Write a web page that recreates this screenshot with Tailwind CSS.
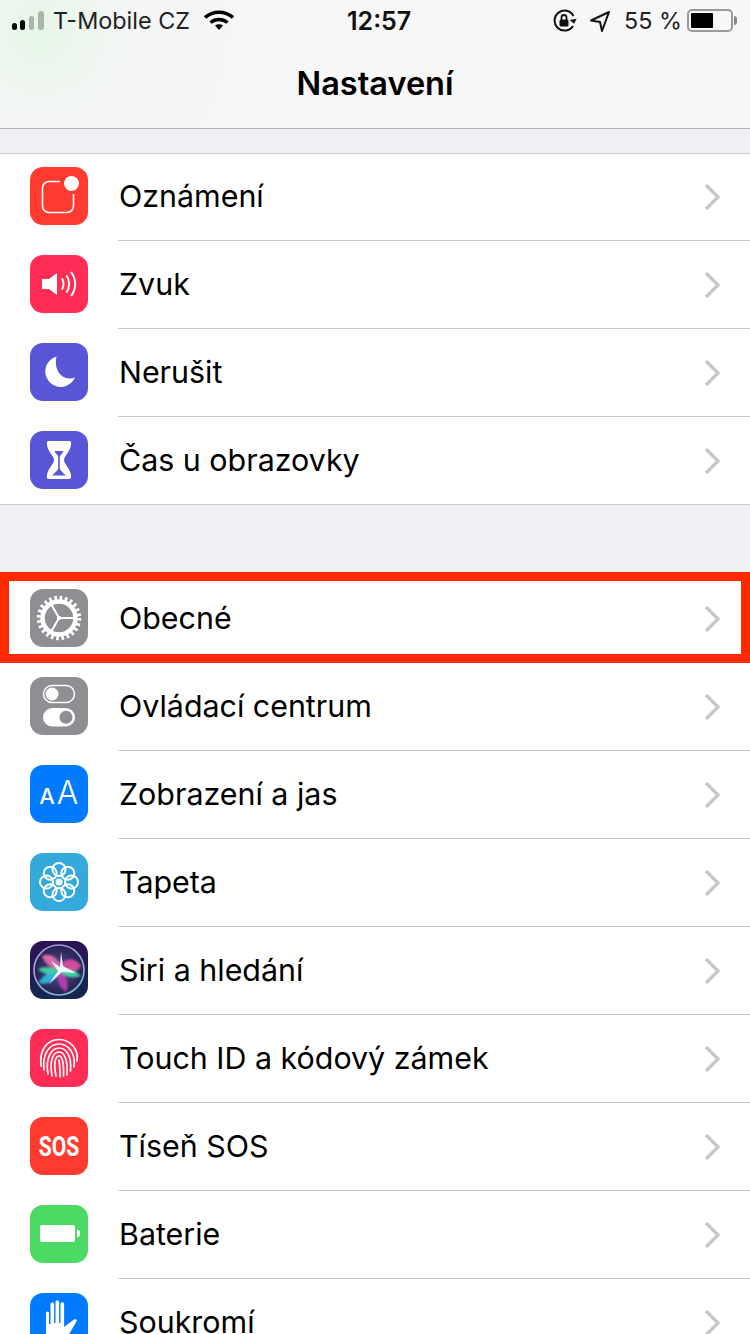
<!DOCTYPE html>
<html lang="cs">
<head>
  <meta charset="UTF-8">
  <meta name="viewport" content="width=device-width, initial-scale=1">
  <title>Nastavení</title>
  <script src="https://cdn.jsdelivr.net/npm/@tailwindcss/browser@4"></script>
</head>
<body class="bg-[#efeff4] font-['Inter',sans-serif] text-black">
<div class="relative w-[750px] h-[1334px] overflow-hidden">

  <!-- Navigation -->
  <div class="h-[129px] border-b border-[#b2b2b6] bg-[radial-gradient(circle_at_40px_30px,#e5f6e7,#f3f6f4_85px,#f7f7f8_300px)]">
    <div class="relative flex h-[41px] items-center justify-between pl-[12px] pr-[13px] text-[23.4px] leading-none text-[#222]">
      <div class="flex items-center">
        <svg width="34" height="22" viewBox="0 0 34 22" class="mr-[7px]">
          <rect x="0" y="13" width="5" height="7" rx="2.5" fill="#000"/>
          <rect x="8" y="10" width="5" height="10" rx="2.5" fill="#000"/>
          <rect x="17" y="6" width="5" height="14" rx="2.5" fill="#a9b5a9"/>
          <rect x="26" y="1" width="6" height="19" rx="3" fill="#a9b5a9"/>
        </svg>
        <span>T-Mobile CZ</span>
        <svg width="30" height="22" viewBox="0 0 30 22" class="ml-[14px]">
          <path d="M1 7.5C9 .5 21 .5 29 7.5" fill="none" stroke="#000" stroke-width="3.4"/>
          <path d="M6.500 12.500C11.500 8.500 18.500 8.500 23.500 12.500" fill="none" stroke="#000" stroke-width="3.400"/>
          <path d="M11 15.500C13.500 13.700 16.500 13.700 19 15.500L15 20Z" fill="#000"/>
        </svg>
      </div>
      <span class="absolute left-[347px] top-[8px] text-[25px] font-semibold leading-[26px] text-[#111]">12:57</span>
      <div class="flex items-center">
        <svg width="26" height="26" viewBox="0 0 26 26">
          <path d="M21 18A10 10 0 1 1 21.500 8" fill="none" stroke="#111" stroke-width="2"/>
          <path d="M18 11.500L25 11.500L21.500 16Z" fill="#111" transform="rotate(-10 21 13)"/>
          <rect x="7.500" y="11.500" width="9" height="7" rx="1.500" fill="#111"/>
          <path d="M9.500 12V9.500a2.500 2.500 0 0 1 5 0V12" fill="none" stroke="#111" stroke-width="1.800"/>
        </svg>
        <svg width="22" height="24" viewBox="0 0 22 24" class="ml-[11px]">
          <path d="M20 3L2 11.500L11 13L13 22Z" fill="none" stroke="#111" stroke-width="2" stroke-linejoin="round"/>
        </svg>
        <span class="ml-[13px]">55 %</span>
        <div class="ml-[5px] flex h-[23px] w-[46px] items-center rounded-[5px] border-[2px] border-[#9a9a9a] pl-[2px]">
          <div class="h-[15px] w-[22px] rounded-[1px] bg-black"></div>
        </div>
        <div class="ml-[1px] h-[9px] w-[3px] rounded-r-[3px] bg-[#8a8a8a]"></div>
      </div>
    </div>
    <div class="mt-[20px] text-center text-[32.5px] font-semibold leading-[46px]">Nastavení</div>
  </div>

  <div class="h-[24px]"></div>

  <!-- First group -->
  <div class="bg-white shadow-[inset_0_1px_0_#c8c7cc]">
    <div class="flex h-[88px]">
      <div class="flex w-[118px] items-center pb-[2px] pl-[30px]">
        <svg width="58" height="58" viewBox="0 0 58 58">
          <rect width="58" height="58" rx="13" fill="#ff3b30"/>
          <path d="M30 14.500H19a6.500 6.500 0 0 0-6.500 6.500V39a6.500 6.500 0 0 0 6.500 6.500H37a6.500 6.500 0 0 0 6.500-6.500V27" fill="none" stroke="#fff" stroke-width="1.600"/>
          <circle cx="41.500" cy="16.500" r="7.500" fill="#fff"/>
        </svg>
      </div>
      <div class="flex flex-1 items-center justify-between border-b border-[#c8c7cc] pl-px pr-[30px] text-[30.4px]">
        <span>Oznámení</span>
        <svg width="16" height="28" viewBox="0 0 16 28"><path d="M2 2L14 14L2 26" fill="none" stroke="#c7c7cc" stroke-width="3.500"/></svg>
      </div>
    </div>
    <div class="flex h-[88px]">
      <div class="flex w-[118px] items-center pb-[2px] pl-[30px]">
        <svg width="58" height="58" viewBox="0 0 58 58">
          <rect width="58" height="58" rx="13" fill="#ff2d55"/>
          <path d="M12 24H19L27 18V40L19 34H12Z" fill="#fff"/>
          <path d="M32 23.500C34 26.500 34 31.500 32 34.500M36.500 20.500C40 25.500 40 32.500 36.500 37.500M41 17C46.500 24 46.500 34 41 41" fill="none" stroke="#fff" stroke-width="2"/>
        </svg>
      </div>
      <div class="flex flex-1 items-center justify-between border-b border-[#c8c7cc] pl-px pr-[30px] text-[30.4px]">
        <span>Zvuk</span>
        <svg width="16" height="28" viewBox="0 0 16 28"><path d="M2 2L14 14L2 26" fill="none" stroke="#c7c7cc" stroke-width="3.500"/></svg>
      </div>
    </div>
    <div class="flex h-[88px]">
      <div class="flex w-[118px] items-center pb-[2px] pl-[30px]">
        <svg width="58" height="58" viewBox="0 0 58 58">
          <rect width="58" height="58" rx="13" fill="#5856d6"/>
          <path d="M26.500 13.500A15.500 15.500 0 1 0 45 34.500C35 38.500 23 30 26.500 13.500Z" fill="#fff"/>
        </svg>
      </div>
      <div class="flex flex-1 items-center justify-between border-b border-[#c8c7cc] pl-px pr-[30px] text-[30.4px]">
        <span>Nerušit</span>
        <svg width="16" height="28" viewBox="0 0 16 28"><path d="M2 2L14 14L2 26" fill="none" stroke="#c7c7cc" stroke-width="3.500"/></svg>
      </div>
    </div>
    <div class="flex h-[88px] border-b border-[#c8c7cc]">
      <div class="flex w-[118px] items-center pb-px pl-[30px]">
        <svg width="58" height="58" viewBox="0 0 58 58">
          <rect width="58" height="58" rx="13" fill="#5856d6"/>
          <path d="M19 10H39C41 10 41.500 11 41 14C40 21 34 25 34 29C34 33 40 37 41 44C41.500 47 40.500 48 39 48H19C17 48 16.500 47 17 44C18 37 24 33 24 29C24 25 18 21 17 14C16.500 11 17 10 19 10Z" fill="#fff"/>
          <path d="M24.500 20H33.500C32.500 22.500 30 24 29.800 26V37C30 39.500 33 41.500 36 44.500H22C25 41.500 28 39.500 28.200 37V26C28 24 25.500 22.500 24.500 20Z" fill="#5856d6"/>
        </svg>
      </div>
      <div class="flex flex-1 items-center justify-between pl-px pr-[30px] text-[30.4px]">
        <span>Čas u obrazovky</span>
        <svg width="16" height="28" viewBox="0 0 16 28"><path d="M2 2L14 14L2 26" fill="none" stroke="#c7c7cc" stroke-width="3.500"/></svg>
      </div>
    </div>
  </div>

  <div class="h-[70px]"></div>

  <!-- Second group -->
  <div class="bg-white">
    <div class="flex h-[88px]">
      <div class="flex w-[118px] items-center pb-[2px] pl-[30px]">
        <svg width="58" height="58" viewBox="0 0 58 58">
          <rect width="58" height="58" rx="13" fill="#8e8e93"/>
          <circle cx="29" cy="29" r="20" fill="none" stroke="#fff" stroke-width="4.500" stroke-dasharray="2.600 2.636"/>
          <circle cx="29" cy="29" r="16.500" fill="none" stroke="#fff" stroke-width="4.500"/>
          <path d="M29 29H45M29 29L21 15M29 29L21 43" fill="none" stroke="#fff" stroke-width="2"/>
          <circle cx="29" cy="29" r="2.200" fill="#fff"/>
        </svg>
      </div>
      <div class="flex flex-1 items-center justify-between border-b border-[#c8c7cc] pl-px pr-[30px] text-[30.4px]">
        <span>Obecné</span>
        <svg width="16" height="28" viewBox="0 0 16 28"><path d="M2 2L14 14L2 26" fill="none" stroke="#c7c7cc" stroke-width="3.500"/></svg>
      </div>
    </div>
    <div class="flex h-[88px]">
      <div class="flex w-[118px] items-center pb-[2px] pl-[30px]">
        <svg width="58" height="58" viewBox="0 0 58 58">
          <rect width="58" height="58" rx="13" fill="#8e8e93"/>
          <rect x="13.500" y="8.500" width="31" height="17" rx="8.500" fill="none" stroke="#fff" stroke-width="1.500"/>
          <circle cx="22" cy="17" r="6.500" fill="#fff"/>
          <rect x="13" y="31" width="32" height="18.500" rx="9.250" fill="#fff"/>
          <circle cx="36" cy="40.250" r="6.500" fill="#8e8e93"/>
        </svg>
      </div>
      <div class="flex flex-1 items-center justify-between border-b border-[#c8c7cc] pl-px pr-[30px] text-[30.4px]">
        <span>Ovládací centrum</span>
        <svg width="16" height="28" viewBox="0 0 16 28"><path d="M2 2L14 14L2 26" fill="none" stroke="#c7c7cc" stroke-width="3.500"/></svg>
      </div>
    </div>
    <div class="flex h-[88px]">
      <div class="flex w-[118px] items-center pb-[2px] pl-[30px]">
        <svg width="58" height="58" viewBox="0 0 58 58">
          <rect width="58" height="58" rx="13" fill="#007aff"/>
          <text x="17" y="38.500" text-anchor="middle" font-family="Inter" font-size="22" font-weight="500" fill="#fff">A</text>
          <text x="37.500" y="38.500" text-anchor="middle" font-family="Inter" font-size="32" font-weight="300" fill="#fff">A</text>
        </svg>
      </div>
      <div class="flex flex-1 items-center justify-between border-b border-[#c8c7cc] pl-px pr-[30px] text-[30.4px]">
        <span>Zobrazení a jas</span>
        <svg width="16" height="28" viewBox="0 0 16 28"><path d="M2 2L14 14L2 26" fill="none" stroke="#c7c7cc" stroke-width="3.500"/></svg>
      </div>
    </div>
    <div class="flex h-[88px]">
      <div class="flex w-[118px] items-center pb-[2px] pl-[30px]">
        <svg width="58" height="58" viewBox="0 0 58 58">
          <rect width="58" height="58" rx="13" fill="#34aadc"/>
          <g fill="none" stroke="#fff" stroke-width="2">
            <circle cx="29" cy="16.500" r="6.500"/><circle cx="37.800" cy="20.200" r="6.500"/>
            <circle cx="41.500" cy="29" r="6.500"/><circle cx="37.800" cy="37.800" r="6.500"/>
            <circle cx="29" cy="41.500" r="6.500"/><circle cx="20.200" cy="37.800" r="6.500"/>
            <circle cx="16.500" cy="29" r="6.500"/><circle cx="20.200" cy="20.200" r="6.500"/>
          </g>
          <circle cx="29" cy="29" r="3.500" fill="#fff"/>
        </svg>
      </div>
      <div class="flex flex-1 items-center justify-between border-b border-[#c8c7cc] pl-px pr-[30px] text-[30.4px]">
        <span>Tapeta</span>
        <svg width="16" height="28" viewBox="0 0 16 28"><path d="M2 2L14 14L2 26" fill="none" stroke="#c7c7cc" stroke-width="3.500"/></svg>
      </div>
    </div>
    <div class="flex h-[88px]">
      <div class="flex w-[118px] items-center pb-[2px] pl-[30px]">
        <svg width="58" height="58" viewBox="0 0 58 58">
          <defs>
            <linearGradient id="siriBg" x1="0" y1="0" x2="0" y2="1"><stop offset="0" stop-color="#2e1155"/><stop offset="1" stop-color="#14284f"/></linearGradient>
            <radialGradient id="siriOrb" cx="0.5" cy="0.5" r="0.55"><stop offset="0" stop-color="#5a4a90"/><stop offset="1" stop-color="#1c1f4a"/></radialGradient>
            <linearGradient id="siriRing" x1="0" y1="0" x2="1" y2="1"><stop offset="0" stop-color="#b98ad8"/><stop offset="1" stop-color="#6fc4cf"/></linearGradient>
            <filter id="siriBlur" x="-20%" y="-20%" width="140%" height="140%"><feGaussianBlur stdDeviation="1.200"/></filter>
            <filter id="siriGlow" x="-20%" y="-20%" width="140%" height="140%"><feGaussianBlur stdDeviation="0.700"/></filter>
          </defs>
          <rect width="58" height="58" rx="13" fill="url(#siriBg)"/>
          <circle cx="29" cy="29" r="25" fill="url(#siriOrb)" stroke="url(#siriRing)" stroke-width="1.700"/>
          <g filter="url(#siriBlur)">
            <path d="M12 15C21 11 29 18 33 29C24 29 15 24 12 15Z" fill="#d96aa8"/>
            <path d="M29 25C36 16 46 17 51 25C46 34 36 33 29 25Z" fill="#d24c9c"/>
            <path d="M29 29C36 34 40 43 36 51C29 46 25 37 29 29Z" fill="#b03fb0"/>
            <path d="M29 29C37 27 45 29 51 35C42 38 34 36 29 29Z" fill="#3fd0a5"/>
            <path d="M29 29C21 29 12 35 8 42C19 45 27 39 29 29Z" fill="#2fb0d8"/>
            <path d="M29 29C22 26 14 25 8 28C14 34 23 35 29 29Z" fill="#3fcfa0"/>
          </g>
          <path d="M31 11L33 25L46 32L32 31L19 43L28 30L21 20L30 26Z" fill="#eafcff" filter="url(#siriGlow)"/>
        </svg>
      </div>
      <div class="flex flex-1 items-center justify-between border-b border-[#c8c7cc] pl-px pr-[30px] text-[30.4px]">
        <span>Siri a hledání</span>
        <svg width="16" height="28" viewBox="0 0 16 28"><path d="M2 2L14 14L2 26" fill="none" stroke="#c7c7cc" stroke-width="3.500"/></svg>
      </div>
    </div>
    <div class="flex h-[88px]">
      <div class="flex w-[118px] items-center pb-[2px] pl-[30px]">
        <svg width="58" height="58" viewBox="0 0 58 58">
          <rect width="58" height="58" rx="13" fill="#ff2d55"/>
          <g fill="none" stroke="#fff" stroke-width="1.700" stroke-linecap="round">
            <path d="M11 37C9 20 18 10.500 29 10.500C40 10.500 49 20 47 32"/>
            <path d="M14 41C12 24 20 15 29 15C38 15 46 24 44 38"/>
            <path d="M18 45C15 28 22 19 29 19C36 19 42 27 40.500 42"/>
            <path d="M22 47C19 30 24 23 29 23C34 23 38 30 37 46"/>
            <path d="M26 47C23 33 26 27 29 27C32 27 34 33 33.500 47"/>
            <path d="M29 31C30 37 30 42 30 48"/>
          </g>
        </svg>
      </div>
      <div class="flex flex-1 items-center justify-between border-b border-[#c8c7cc] pl-px pr-[30px] text-[30.4px]">
        <span>Touch ID a kódový zámek</span>
        <svg width="16" height="28" viewBox="0 0 16 28"><path d="M2 2L14 14L2 26" fill="none" stroke="#c7c7cc" stroke-width="3.500"/></svg>
      </div>
    </div>
    <div class="flex h-[88px]">
      <div class="flex w-[118px] items-center pb-[2px] pl-[30px]">
        <svg width="58" height="58" viewBox="0 0 58 58">
          <rect width="58" height="58" rx="13" fill="#ff3b30"/>
          <text x="29" y="39" text-anchor="middle" font-family="Roboto" font-size="27.500" font-weight="700" fill="#fff" textLength="40.500" lengthAdjust="spacingAndGlyphs">SOS</text>
        </svg>
      </div>
      <div class="flex flex-1 items-center justify-between border-b border-[#c8c7cc] pl-px pr-[30px] text-[30.4px]">
        <span>Tíseň SOS</span>
        <svg width="16" height="28" viewBox="0 0 16 28"><path d="M2 2L14 14L2 26" fill="none" stroke="#c7c7cc" stroke-width="3.500"/></svg>
      </div>
    </div>
    <div class="flex h-[88px]">
      <div class="flex w-[118px] items-center pb-[2px] pl-[30px]">
        <svg width="58" height="58" viewBox="0 0 58 58">
          <rect width="58" height="58" rx="13" fill="#4cd964"/>
          <rect x="10" y="20" width="35" height="17" rx="2" fill="#fff"/>
          <path d="M47 24.500L50 26V31L47 32.500Z" fill="#fff"/>
        </svg>
      </div>
      <div class="flex flex-1 items-center justify-between border-b border-[#c8c7cc] pl-px pr-[30px] text-[30.4px]">
        <span>Baterie</span>
        <svg width="16" height="28" viewBox="0 0 16 28"><path d="M2 2L14 14L2 26" fill="none" stroke="#c7c7cc" stroke-width="3.500"/></svg>
      </div>
    </div>
    <div class="flex h-[88px]">
      <div class="flex w-[118px] items-center pb-[2px] pl-[30px]">
        <svg width="58" height="58" viewBox="0 0 58 58">
          <rect width="58" height="58" rx="13" fill="#007aff"/>
          <path d="M16 20a1.500 1.500 0 0 1 3 0V31H20.500V11a1.800 1.800 0 0 1 3.600 0V30H25.500V9a1.800 1.800 0 0 1 3.600 0V30H30.500V11a1.800 1.800 0 0 1 3.600 0V34L44 26.500C46 25.500 47.500 27 46.500 28.500L38 43C36 48 32 52 26 52C20 52 16 48 16 42Z" fill="#fff"/>
        </svg>
      </div>
      <div class="flex flex-1 items-center justify-between pl-px pr-[30px] text-[30.4px]">
        <span>Soukromí</span>
        <svg width="16" height="28" viewBox="0 0 16 28"><path d="M2 2L14 14L2 26" fill="none" stroke="#c7c7cc" stroke-width="3.500"/></svg>
      </div>
    </div>
  </div>

  <!-- Red highlight around Obecné -->
  <div class="absolute left-0 top-[572px] h-[91px] w-[750px] border-[9px] border-[#ff2a00]"></div>
</div>
</body>
</html>
